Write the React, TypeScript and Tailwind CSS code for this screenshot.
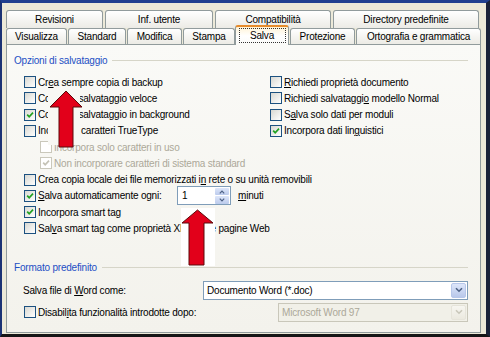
import React from "react";

const font = "font-['Liberation_Sans',Arial,sans-serif] text-[10px] tracking-[-0.2px]";

function CheckBox({ checked = false, disabled = false }: { checked?: boolean; disabled?: boolean }) {
  return (
    <span
      className={`relative shrink-0 w-[12px] h-[12px] border ${
        disabled ? "border-[#cac8bb] bg-white" : "border-[#1c5180] bg-gradient-to-br from-[#d8d8d2] to-white"
      }`}
    >
      {checked && (
        <svg viewBox="0 0 10 10" className="absolute inset-0 w-[10px] h-[10px]">
          <path d="M2.2 4.6 L4.2 6.8 L8 2.6" fill="none" stroke={disabled ? "#c4c2b5" : "#21a121"} strokeWidth="1.7" />
        </svg>
      )}
    </span>
  );
}

function Option({
  checked,
  disabled,
  children,
  className = "",
}: {
  checked?: boolean;
  disabled?: boolean;
  children: React.ReactNode;
  className?: string;
}) {
  return (
    <div className={`flex items-center gap-[2px] h-[16.25px] ${className}`}>
      <CheckBox checked={checked} disabled={disabled} />
      <span className={`whitespace-nowrap ${disabled ? "text-[#aca899]" : "text-black"}`}>{children}</span>
    </div>
  );
}

function Tab({ label, w }: { label: string; w: string }) {
  return (
    <div
      className={`${w} h-full flex items-center justify-center whitespace-nowrap border border-b-0 border-[#919b9c] rounded-t-[3px] bg-gradient-to-b from-white to-[#ecebe5]`}
    >
      {label}
    </div>
  );
}

function Chevron({ color }: { color: string }) {
  return (
    <svg viewBox="0 0 8 6" className="w-[8px] h-[6px]">
      <path d="M1 1.2 L4 4.2 L7 1.2" fill="none" stroke={color} strokeWidth="1.6" />
    </svg>
  );
}

function Select({ value, w, disabled = false }: { value: string; w: string; disabled?: boolean }) {
  return (
    <div
      className={`flex items-center h-[19px] ${w} border ${
        disabled ? "border-[#c9c7ba] bg-[#f1f0e8] text-[#aca899]" : "border-[#7f9db9] bg-white text-black"
      }`}
    >
      <span className="flex-1 pl-[3px] whitespace-nowrap">{value}</span>
      <span
        className={`mr-[1px] w-[15px] h-[15px] flex items-center justify-center rounded-[2px] border ${
          disabled
            ? "border-[#e6e4da] bg-gradient-to-b from-[#f7f6f1] to-[#ebe9df]"
            : "border-[#b7c7ea] bg-gradient-to-b from-[#dde6fa] to-[#b9c8ea]"
        }`}
      >
        <Chevron color={disabled ? "#c9c7ba" : "#4d6185"} />
      </span>
    </div>
  );
}

function SpinBox() {
  return (
    <div className="flex items-center w-[54px] h-[19px] border border-[#7f9db9] bg-white">
      <span className="flex-1 pl-[4px]">1</span>
      <div className="flex flex-col gap-[1px] mr-[1px]">
        <span className="w-[14px] h-[7.5px] flex items-center justify-center rounded-[1px] bg-gradient-to-b from-[#dde6fa] to-[#bccbec]">
          <svg viewBox="0 0 6 4" className="w-[6px] h-[4px]">
            <path d="M0.8 3.3 L3 1 L5.2 3.3" fill="none" stroke="#4d6185" strokeWidth="1.2" />
          </svg>
        </span>
        <span className="w-[14px] h-[7.5px] flex items-center justify-center rounded-[1px] bg-gradient-to-b from-[#dde6fa] to-[#bccbec]">
          <svg viewBox="0 0 6 4" className="w-[6px] h-[4px]">
            <path d="M0.8 0.7 L3 3 L5.2 0.7" fill="none" stroke="#4d6185" strokeWidth="1.2" />
          </svg>
        </span>
      </div>
    </div>
  );
}

function GroupHeader({ label }: { label: string }) {
  return (
    <div className="flex items-center gap-[5px] h-[12px] pl-[7px]">
      <span className="text-[#1d4fc4] whitespace-nowrap">{label}</span>
      <span className="flex-1 h-px bg-[#d6d5c8]" />
    </div>
  );
}

export default function App() {
  return (
    <div className={`relative w-[490px] h-[337px] ${font}`}>
      <div className="w-full h-full flex flex-col bg-[#ece9d8] border-t-[3px] border-l-2 border-r-[4px] border-b-[3px] border-t-[#21408f] border-l-[#1b3274] border-r-[#1a2238] border-b-[#151515] pt-[7px] pl-[4px]">
        {/* back row */}
        <div className="flex gap-[2px] h-[18px]">
          <Tab label="Revisioni" w="w-[97px]" />
          <Tab label="Inf. utente" w="w-[108px]" />
          <Tab label="Compatibilità" w="w-[116px]" />
          <Tab label="Directory predefinite" w="w-[146px]" />
        </div>

        {/* front row */}
        <div className="flex items-end gap-[1px] h-[16px]">
          <Tab label="Visualizza" w="w-[61px]" />
          <Tab label="Standard" w="w-[58px]" />
          <Tab label="Modifica" w="w-[55px]" />
          <Tab label="Stampa" w="w-[52px]" />
          <div className="relative z-10 -ml-[1px] mb-[-1px] w-[54px] h-[20px] flex justify-center pt-[1px] border-x border-[#919b9c] border-t-2 border-t-[#e68b2c] rounded-t-[3px] bg-gradient-to-b from-[#fff3d6] via-white to-[#fafaf7]">
            <span className="w-[47px] h-[15px] mt-[0px] flex items-center justify-center border border-dotted border-[#333]">
              Salva
            </span>
          </div>
          <Tab label="Protezione" w="w-[65px]" />
          <Tab label="Ortografia e grammatica" w="w-[125px]" />
        </div>

        {/* panel */}
        <div className="flex-1 mr-[5px] mb-[1px] border border-[#919b9c] bg-gradient-to-b from-[#fafaf7] to-[#f3f2ec] pt-[9px] pr-[12px]">
          <GroupHeader label="Opzioni di salvataggio" />

          <div className="mt-[8px] pl-[17px]">
            <div className="flex">
              <div className="w-[246px]">
                <Option>
                  Cr<u>e</u>a sempre copia di backup
                </Option>
                <Option>Consenti salvataggio veloce</Option>
                <Option checked>Consenti salvataggio in background</Option>
                <Option>Incorpora caratteri TrueType</Option>
              </div>
              <div>
                <Option>
                  <u>R</u>ichiedi proprietà documento
                </Option>
                <Option>
                  Richiedi salvataggi<u>o</u> modello Normal
                </Option>
                <Option>
                  S<u>a</u>lva solo dati per moduli
                </Option>
                <Option checked>
                  Incorpora dati lin<u>g</u>uistici
                </Option>
              </div>
            </div>
            <Option disabled className="pl-[16px]">
              Incorpora solo caratteri in uso
            </Option>
            <Option disabled checked className="pl-[16px]">
              Non incorporare caratteri di sistema standard
            </Option>
            <Option>
              Crea copia locale dei file memorizzati i<u>n</u> rete o su unità removibili
            </Option>
            <div className="flex items-center h-[16.25px]">
              <div className="w-[153px]">
                <Option checked>
                  <u>S</u>alva automaticamente ogni:
                </Option>
              </div>
              <SpinBox />
              <span className="ml-[7px]">
                <u>m</u>inuti
              </span>
            </div>
            <Option checked>
              Incorpora smart ta<u>g</u>
            </Option>
            <Option>
              Sal<u>v</u>a smart tag come proprietà XML nelle pagine Web
            </Option>
          </div>

          <div className="mt-[25px]">
            <GroupHeader label="Formato predefinito" />
          </div>

          <div className="mt-[7px] pl-[16px] flex items-center h-[19px]">
            <span className="w-[180px] whitespace-nowrap">
              Salva file di <u>W</u>ord come:
            </span>
            <Select value="Documento Word (*.doc)" w="w-[265px]" />
          </div>

          <div className="mt-[3px] pl-[17px] flex items-center h-[19px]">
            <div className="flex-1">
              <Option>
                Disabil<u>i</u>ta funzionalità introdotte dopo:
              </Option>
            </div>
            <Select value="Microsoft Word 97" w="w-[190px]" disabled />
          </div>
        </div>
      </div>

      {/* red arrows drawn over the dialog */}
      <svg className="absolute left-0 top-0 w-[490px] h-[337px] pointer-events-none" viewBox="0 0 490 337">
        <rect x="48" y="89" width="32" height="56" fill="#f8f8f4" />
        <polygon
          points="66,91 82,107 73,107 73,147 59,147 59,107 50,107"
          fill="#e2001a"
          stroke="#5c0a0a"
          strokeWidth="1"
        />
        <rect x="181" y="208" width="34" height="58" fill="#ffffff" />
        <polygon
          points="197.5,210 213,223 204,223 204,265 189,265 189,223 182,223"
          fill="#e2001a"
          stroke="#5c0a0a"
          strokeWidth="1"
        />
      </svg>
    </div>
  );
}
